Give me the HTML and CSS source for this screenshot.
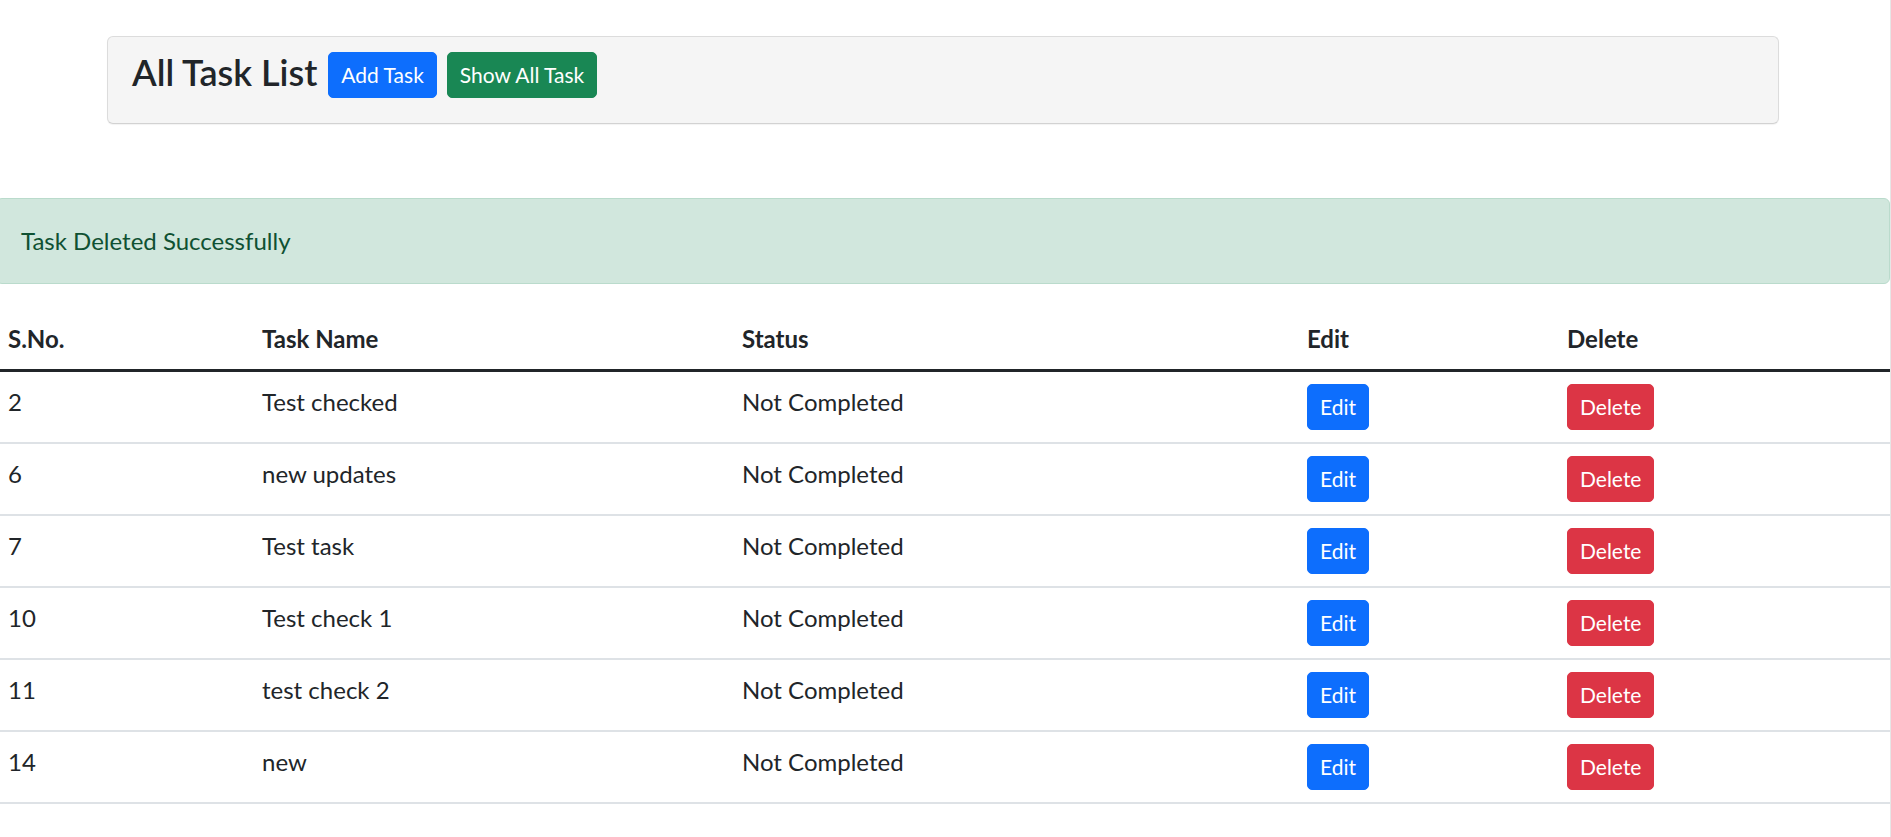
FILE: index.html
```html
<!DOCTYPE html>
<html lang="en">
<head>
<meta charset="utf-8">
<title>All Task List</title>
<link rel="stylesheet" href="styles.css">
</head>
<body>
  <header class="top">
    <div class="bar">
      <h4 class="title">All Task List</h4>
      <a class="btn btn-primary btn-add" href="#">Add Task</a>
      <a class="btn btn-success" href="#">Show All Task</a>
    </div>
  </header>

  <main class="main">
    <div class="alert">Task Deleted Successfully</div>

    <table class="table">
      <colgroup>
        <col class="c-sno">
        <col class="c-name">
        <col class="c-status">
        <col class="c-edit">
        <col class="c-del">
      </colgroup>
      <thead>
        <tr><th>S.No.</th><th>Task Name</th><th>Status</th><th>Edit</th><th>Delete</th></tr>
      </thead>
      <tbody>
        <tr><td>2</td><td>Test checked</td><td>Not Completed</td><td><a class="btn btn-primary" href="#">Edit</a></td><td><a class="btn btn-danger" href="#">Delete</a></td></tr>
        <tr><td>6</td><td>new updates</td><td>Not Completed</td><td><a class="btn btn-primary" href="#">Edit</a></td><td><a class="btn btn-danger" href="#">Delete</a></td></tr>
        <tr><td>7</td><td>Test task</td><td>Not Completed</td><td><a class="btn btn-primary" href="#">Edit</a></td><td><a class="btn btn-danger" href="#">Delete</a></td></tr>
        <tr><td>10</td><td>Test check 1</td><td>Not Completed</td><td><a class="btn btn-primary" href="#">Edit</a></td><td><a class="btn btn-danger" href="#">Delete</a></td></tr>
        <tr><td>11</td><td>test check 2</td><td>Not Completed</td><td><a class="btn btn-primary" href="#">Edit</a></td><td><a class="btn btn-danger" href="#">Delete</a></td></tr>
        <tr><td>14</td><td>new</td><td>Not Completed</td><td><a class="btn btn-primary" href="#">Edit</a></td><td><a class="btn btn-danger" href="#">Delete</a></td></tr>
      </tbody>
    </table>
  </main>
</body>
</html>
```
FILE: styles.css
```css
* { box-sizing: border-box; }

html, body { margin: 0; padding: 0; }

body {
  min-height: 100vh;
  border-right: 1px solid #e6e6e6;
  background: #fff;
  color: #212529;
  font-family: "Lato", "Open Sans", sans-serif;
  font-size: 24px;
  line-height: 36px;
  overflow-x: hidden;
}

/* ---------- top bar ---------- */
.top {
  padding: 36px 111px 0 107px;
}

.bar {
  display: flex;
  align-items: flex-start;
  gap: 10px;
  padding: 12px 24px 25px 24px;
  background: #f5f5f5;
  border: 1px solid #dcdcdc;
  border-bottom-color: #d2d2d2;
  border-radius: 6px;
  box-shadow: 0 1px 1px rgba(0, 0, 0, 0.05);
}

.title {
  margin: 2px 0 0 0;
  font-size: 36px;
  line-height: 43px;
  font-weight: 600;
  color: #212529;
}

.bar .btn { margin-top: 3px; }
.btn-add { margin-left: 1px; }

/* ---------- buttons ---------- */
.btn {
  display: inline-block;
  padding: 6px 12px;
  font-size: 21px;
  line-height: 32px;
  border: 1px solid transparent;
  border-radius: 5px;
  color: #fff;
  text-decoration: none;
  white-space: nowrap;
}

.btn-primary { background: #0d6efd; border-color: #0d6efd; }
.btn-success { background: #198754; border-color: #198754; }
.btn-danger  { background: #dc3545; border-color: #dc3545; }

/* ---------- main ---------- */
.main {
  margin: 74px 0 0 -4px;
}

.alert {
  padding: 24px;
  margin-bottom: 24px;
  background: #d1e7dd;
  border: 1px solid #badbcc;
  border-radius: 6px;
  color: #0f5132;
  line-height: 36px;
}

/* ---------- table ---------- */
.table {
  width: 1894px;
  border-collapse: collapse;
  table-layout: fixed;
}

.c-sno    { width: 254px; }
.c-name   { width: 480px; }
.c-status { width: 565px; }
.c-edit   { width: 260px; }
.c-del    { width: 335px; }

.table th,
.table td {
  padding: 12px;
  text-align: left;
  vertical-align: top;
}

.table th {
  font-weight: 700;
  padding-top: 13px;
  padding-bottom: 12px;
  border-bottom: 3px solid #212529;
}

.table td {
  padding-bottom: 12px;
  border-bottom: 2px solid #dee2e6;
}

.table td .btn { vertical-align: top; }
```
